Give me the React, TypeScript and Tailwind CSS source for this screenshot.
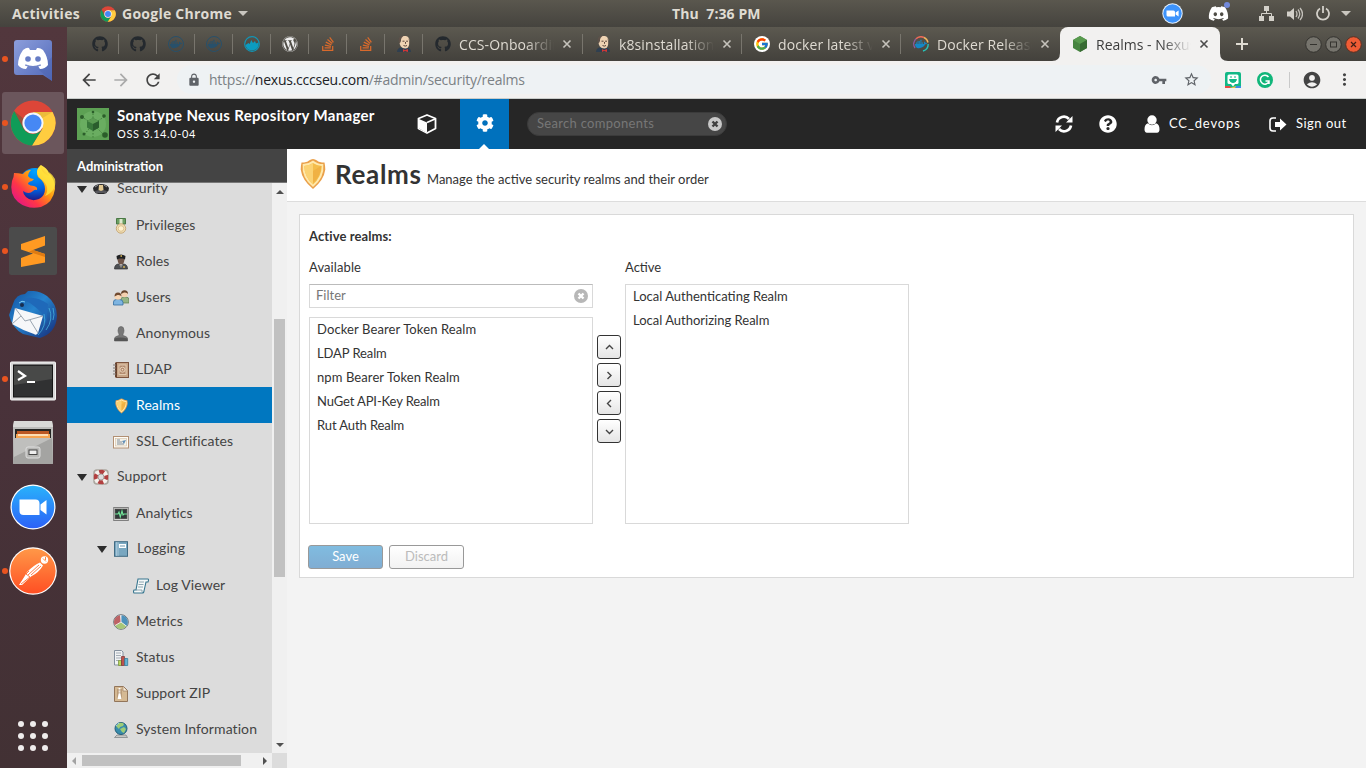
import React from 'react';
import { FaGithub, FaDocker, FaWordpress, FaStackOverflow, FaDiscord, FaCog, FaQuestionCircle } from 'react-icons/fa';
import { MdArrowBack, MdArrowForward, MdRefresh, MdLock, MdVpnKey, MdStarBorder, MdAccountCircle, MdMoreVert } from 'react-icons/md';
import { FcGoogle } from 'react-icons/fc';

const sys = "font-['Open_Sans','Noto_Sans',sans-serif]";

function Chrome({ size }: { size: number }) {
  return (
    <svg width={size} height={size} viewBox="1 1 46 46">
      <circle cx="24" cy="24" r="22.5" fill="#dc4638" />
      <path d="M24 13H43.6A22.5 22.5 0 0 1 23 46.5L33.5 29.5Z" fill="#ffcd40" />
      <path d="M5.2 12L14.5 29.5A11 11 0 0 0 33.5 29.5L23 46.5A22.5 22.5 0 0 1 5.2 12Z" fill="#109c58" />
      <path d="M24 13H43.6L33.5 19Z" fill="#b58a2a" opacity=".25" />
      <path d="M14 29L5.2 12L15 20Z" fill="#0a6b3c" opacity=".3" />
      <circle cx="24" cy="24" r="10.6" fill="#f5f7fa" />
      <circle cx="24" cy="24" r="8.6" fill="#4688f4" />
    </svg>
  );
}

function Jenkins() {
  return (
    <svg width="16" height="18" viewBox="0 0 16 18">
      <path d="M1 17c0-3 2-4.500 4-4.500h6c2 0 4 1.500 4 4.500z" fill="#2f3f50" />
      <path d="M3 6C3 2.500 5 1 8.500 1s5.200 2 5 5.500-.8 7-4.200 7C5.500 13.500 3.500 10.500 3 6z" fill="#efd3b3" />
      <path d="M3.500 9C1.200 4 3.500.6 8.500.6 6 1.800 4.800 3.500 5 6z" fill="#5d5149" />
      <path d="M12.500 3c1.800 2 1.500 5 .5 7.500V6z" fill="#5d5149" />
      <path d="M6.500 6.200h2m1.600 0h1.900M7.500 10.500q1.800 1.200 3.500 0M9.500 7v1.800" stroke="#49362c" strokeWidth=".9" fill="none" />
      <path d="M7 14l2 1.200 3-1.200v3l-3-1-2 1z" fill="#d33833" />
    </svg>
  );
}

function DockerDocs() {
  return (
    <span className="relative flex size-4 items-center justify-center">
      <svg width="16" height="16" viewBox="0 0 16 16" fill="none" strokeWidth="1.400" className="absolute">
        <path d="M2 12A7.200 7.200 0 0 1 3 2.700" stroke="#8d5c9e" />
        <path d="M3 2.700A7.200 7.200 0 0 1 11 1.500" stroke="#ee6a57" />
        <path d="M11 1.500A7.200 7.200 0 0 1 15 6.500" stroke="#f2b45a" />
        <path d="M15.200 8A7.200 7.200 0 0 1 10 15" stroke="#27c3b9" />
      </svg>
      <FaDocker size={12} color="#1488c6" />
    </span>
  );
}

function Cube() {
  return (
    <svg width="16" height="18" viewBox="0 0 16 18">
      <path d="M8 1l7 4v8l-7 4-7-4V5z" fill="#468440" />
      <path d="M8 1l7 4-7 4-7-4z" fill="#589a4e" />
      <path d="M8 9l7-4v8l-7 4z" fill="#386c33" />
    </svg>
  );
}

const Cross = ({ color = '#c6c3bc' }: { color?: string }) => (
  <svg width="10" height="10" viewBox="0 0 10 10"><path d="M1.500 1.500l7 7m0-7l-7 7" stroke={color} strokeWidth="1.600" /></svg>
);

const ClearIcon = ({ bg, fg }: { bg: string; fg: string }) => (
  <svg width="14" height="14" viewBox="0 0 14 14"><circle cx="7" cy="7" r="7" fill={bg} /><path d="M4.500 4.500l5 5m0-5l-5 5" stroke={fg} strokeWidth="2.400" /></svg>
);

function TopBar() {
  return (
    <header className={`flex h-[27px] shrink-0 items-center bg-linear-to-b from-[#5a574e] to-[#45433e] pl-3 text-[14px] font-bold text-[#dfdbd2] ${sys}`}>
      <span className="w-[88px] tracking-[0.3px]">Activities</span>
      <Chrome size={16} />
      <span className="ml-1.5 w-[111px] whitespace-nowrap tracking-[0.25px]">Google Chrome</span>
      <svg width="10" height="6" className="ml-[5px]"><path d="M0 0h10L5 5z" fill="#c9c6bf" /></svg>
      <span className="ml-[424px] w-[90px] whitespace-pre tracking-[0.1px]">Thu  7:36 PM</span>
      <span className="ml-auto flex items-center">
        <svg width="21" height="21" viewBox="0 0 21 21"><circle cx="10.500" cy="10.500" r="10.200" fill="#e7f1fb" /><circle cx="10.500" cy="10.500" r="9.200" fill="#3d93fb" /><path d="M4.500 7.500h7a1.500 1.500 0 0 1 1.500 1.500v4.500H6A1.500 1.500 0 0 1 4.500 12zM13.600 9.500l3-2v6l-3-2z" fill="#fff" /></svg>
        <span className="relative ml-[25px] h-5 w-[22px]"><FaDiscord size={21} color="#fff" className="-mt-px" /><i className="absolute -top-0.5 right-0 size-1.5 rounded-full bg-[#7289da]" /></span>
        <svg width="15" height="15" viewBox="0 0 15 15" className="ml-[29px]"><path d="M5 0h5v5H5zM0 10h5v5H0zM10 10h5v5h-5z" fill="#d3d0c9" /><path d="M7.500 5v3M2.500 10V7.500h10V10" stroke="#d3d0c9" fill="none" /></svg>
        <svg width="16" height="14" viewBox="0 0 16 14" className="ml-[13px]"><path d="M0 4.500h3L7 1v12L3 9.500H0z" fill="#d3d0c9" /><path d="M9 4q2 3 0 6M11 2.500q3.500 4.500 0 9M13 1q5 6 0 12" stroke="#c3c0b9" strokeWidth="1.300" fill="none" /></svg>
        <svg width="14" height="15" viewBox="0 0 14 15" className="ml-[13px]"><path d="M4 2.500a6 6 0 1 0 6 0M7 0v7" stroke="#d3d0c9" strokeWidth="1.800" fill="none" /></svg>
        <svg width="10" height="6" className="mr-[15px] ml-[11px]"><path d="M0 0h10L5 5z" fill="#c9c6bf" /></svg>
      </span>
    </header>
  );
}

const DockIcons: { dot: boolean; icon: React.ReactNode; active?: boolean }[] = [
  {
    dot: true,
    icon: (
      <svg width="48" height="48" viewBox="0 0 48 48">
        <defs><linearGradient id="dc" x1="0" y1="0" x2="1" y2="1"><stop offset="0" stopColor="#8c9edb" /><stop offset="1" stopColor="#5068b9" /></linearGradient></defs>
        <path d="M8 5h32a3 3 0 0 1 3 3v38l-9-6H8a3 3 0 0 1-3-3V8a3 3 0 0 1 3-3z" fill="url(#dc)" />
        <path d="M30 35l13 11V22z" fill="#4962ae" opacity=".4" />
        <path d="M14 15q4-3 6-2l1 2h6l1-2q3-.5 6 2 5 7 5 15-3 4-8 4l-2-3 3-2q-8 4-16 0l3 2-2 3q-5 0-8-4 0-8 5-15z" fill="#fff" />
        <path d="M16 30q8 4 16 0" stroke="#7084c7" fill="none" /><circle cx="19" cy="24" r="2.800" fill="#667cc5" /><circle cx="29" cy="24" r="2.800" fill="#667cc5" />
      </svg>
    ),
  },
  { dot: true, active: true, icon: <Chrome size={46} /> },
  {
    dot: true,
    icon: (
      <svg width="48" height="48" viewBox="0 0 48 48">
        <defs>
          <linearGradient id="ff" x1=".9" y1=".1" x2=".1" y2=".9"><stop offset="0" stopColor="#fff44f" /><stop offset=".4" stopColor="#ff980e" /><stop offset=".7" stopColor="#ff3647" /><stop offset="1" stopColor="#e31587" /></linearGradient>
          <radialGradient id="fb" cx=".5" cy=".1" r=".9"><stop offset="0" stopColor="#00a5ff" /><stop offset=".6" stopColor="#0060df" /><stop offset="1" stopColor="#24107a" /></radialGradient>
        </defs>
        <circle cx="26" cy="22" r="17" fill="url(#fb)" />
        <path d="M5 11q0 4-2 8Q0 32 9 40q10 8 23 5 12-4 14-18 0-10-6-16Q38 6 32 3q-6 5-3 12 7 5 7 12 0 7-6 10-8 3-13-2-3-3-3-6 6 4 10 0 2-2 4-1 1-3-3-4-4 0-6-2 0-2 4-3l2-2q-4 0-6-3 0-3 3-6-5 0-8 4-5-1-9-1z" transform="translate(0 -1)" fill="url(#ff)" />
        <path d="M32 2q-8 7 0 14 10 8 4 17 12-5 10-17-2-4-6-7 1 5-2 3-7-4-6-10z" fill="#ffe43c" opacity=".8" />
      </svg>
    ),
  },
  {
    dot: true,
    icon: (
      <svg width="48" height="48" viewBox="0 0 48 48"><rect width="48" height="48" rx="2.500" fill="#4b4b4b" /><path d="M12 17l24-8v9.500l-12 4.500 12 4v8.500L12 40v-9l12-4.500-12-4z" fill="#ff9a22" /><path d="M24 23l12 4v3l-16-5.300z" fill="#df7b12" /></svg>
    ),
  },
  {
    dot: false,
    icon: (
      <svg width="50" height="48" viewBox="0 0 50 48">
        <defs><linearGradient id="tb" x1="0" y1="0" x2="1" y2="1"><stop offset="0" stopColor="#114f9e" /><stop offset=".45" stopColor="#2684ce" /><stop offset="1" stopColor="#152874" /></linearGradient></defs>
        <path d="M17 3l3-3q10-1 19 5 10 8 10 20-1 17-17 22L15 43Q4 37 1 24L5 13Q8 3 17 3z" fill="url(#tb)" />
        <path d="M7 17l28 8-5 17q-2 3-4 1Q14 39 4 33z" fill="#f6f7f9" /><path d="M7 17l10 13 18-5M4 33l9-8M30 42l-8-13" stroke="#9aa5b0" fill="none" />
        <path d="M5 14Q14 6 22 12t12 10l4 11 2-20Q27 4 16 8L9 11z" fill="#1f69b9" /><circle cx="14" cy="14" r="2" fill="#192e4e" /><path d="M11 12q3-3 6-1" stroke="#7ccbf0" fill="none" />
        <path d="M36 23q3 12-6 21M41 17q5 11-3 22M45 17q2 7 0 12" stroke="#4bbde5" fill="none" opacity=".7" />
      </svg>
    ),
  },
  {
    dot: true,
    icon: (
      <svg width="46" height="40" viewBox="0 0 46 40" className="mt-[3px]"><rect x=".5" y="1" width="45" height="38" rx="1" fill="#d9d9d9" stroke="#f3f3f3" /><rect x="3.500" y="4" width="39" height="32" fill="#303132" stroke="#161616" /><path d="M4 5h38v13L4 24z" fill="#484948" /><path d="M8 10l7 5-7 4M17 21h8" stroke="#fff" strokeWidth="2.200" fill="none" /></svg>
    ),
  },
  {
    dot: false,
    icon: (
      <svg width="42" height="44" viewBox="0 0 42 44"><path d="M2 0h38l1 5v37H1V5z" fill="#bcbcba" /><path d="M2 0h38l1 6H1z" fill="#d9d9d7" /><rect x="3" y="8" width="36" height="10" fill="#242523" /><path d="M5 10h32v7H5z" fill="#bb5824" /><path d="M4 13h34v5H4z" fill="#f5a452" /><path d="M6 14h30" stroke="#fff0d6" strokeWidth="1.500" /><path d="M2 17h38l1 26H1z" fill="#a4a4a2" /><path d="M2 17h38L2 36z" fill="#bfbfbd" /><rect x="14" y="26" width="14" height="11" rx="2" fill="#b8b8b6" stroke="#dedede" /><rect x="17" y="29" width="8" height="4.500" fill="#eee" stroke="#454545" /></svg>
    ),
  },
  {
    dot: false,
    icon: (
      <svg width="46" height="46" viewBox="0 0 46 46"><defs><linearGradient id="zm" x1="0" y1="0" x2="0" y2="1"><stop offset="0" stopColor="#29b2fb" /><stop offset="1" stopColor="#2c61f7" /></linearGradient></defs><circle cx="23" cy="23" r="22.500" fill="#fff" /><circle cx="23" cy="23" r="21.300" fill="url(#zm)" /><path d="M9.500 15.500h16a4 4 0 0 1 4 4V31h-16a4 4 0 0 1-4-4zM30.500 20.500l6-4.500v14.500l-6-4.500z" fill="#fff" /></svg>
    ),
  },
  {
    dot: true,
    icon: (
      <svg width="48" height="48" viewBox="0 0 48 48"><defs><linearGradient id="pm" x1="0" y1="0" x2="0" y2="1"><stop offset="0" stopColor="#ff9848" /><stop offset="1" stopColor="#ff4f23" /></linearGradient></defs><circle cx="24" cy="24" r="23.800" fill="#fff" /><circle cx="24" cy="24" r="22.600" fill="url(#pm)" /><circle cx="35.500" cy="13" r="3.700" fill="#fff" /><path d="M34 11.500l3 3M36.500 10v3" stroke="#ff8743" /><path d="M31 15.500l3 3q-4 7-12 11l-9 8.500H10q6-9 8-13 7-7 13-9.500z" fill="#fff" /><path d="M30 18l-11 10m13-9L22 28m-2-4l-3 3 4 3-9 7" stroke="#ff7036" fill="none" strokeWidth=".9" /></svg>
    ),
  },
];

function Dock() {
  return (
    <aside className="flex w-[67px] shrink-0 flex-col bg-linear-to-b from-[#52373d] via-[#49323a] to-[#423134]">
      {DockIcons.map((d, i) => (
        <div key={i} className="flex h-16 w-[67px] items-center">
          <div className={d.active ? 'relative ml-0.5 flex h-[62px] w-[62px] items-center justify-center rounded-[3px] bg-[#6b565c]' : 'relative ml-0.5 flex h-[62px] w-[62px] items-center justify-center'}>
            {d.dot && <i className="absolute top-[28px] left-0 size-1.5 rounded-full bg-[#e95420]" />}
            {d.icon}
          </div>
        </div>
      ))}
      <div className="mt-auto mb-[17px] ml-[18px] grid grid-cols-3 gap-1.5 self-start">
        {Array.from({ length: 9 }, (_, i) => <i key={i} className="size-1.5 rounded-full bg-[#efecec]" />)}
      </div>
    </aside>
  );
}

function TabStrip() {
  const so = <FaStackOverflow size={16} color="#d96a2c" />;
  const pins = [
    <FaGithub size={16} color="#24292e" />, <FaGithub size={16} color="#24292e" />,
    <span className="flex size-4 items-center justify-center rounded-full border border-[#28506a]"><FaDocker size={12} color="#28506a" /></span>,
    <span className="flex size-4 items-center justify-center rounded-full border border-[#28506a]"><FaDocker size={12} color="#28506a" /></span>,
    <svg width="16" height="16" viewBox="0 0 16 16"><circle cx="8" cy="8" r="7.300" fill="none" stroke="#1395b5" strokeWidth="1.200" /><path d="M1.500 9l3-2 1.200 1 1.600-4L9 7l2-2 1 2.500 2.500-1Q15 14 8 14.500 2.500 14 1.500 9z" fill="#0b9cc0" /></svg>,
    <FaWordpress size={16} color="#eee" />, so, so, <Jenkins />,
  ];
  const tabs = [
    { t: 'CCS-Onboarding', i: <FaGithub size={16} color="#24292e" />, w: 'w-[160px]' },
    { t: 'k8sinstallation', i: <Jenkins />, w: 'w-[159px]' },
    { t: 'docker latest ve', i: <span className="flex size-4 items-center justify-center rounded-full bg-white"><FcGoogle size={14} /></span>, w: 'w-[159px]' },
    { t: 'Docker Release', i: <DockerDocs />, w: 'w-[159px]' },
  ];
  return (
    <div className={`flex h-[34px] shrink-0 items-center bg-linear-to-b from-[#5c5950] to-[#43413c] pl-[14px] text-[14px] ${sys}`}>
      {pins.map((p, i) => <div key={i} className="flex h-5 w-[38px] items-center justify-center border-r border-[#78756d]">{p}</div>)}
      {tabs.map((t, i) => (
        <div key={i} className={`flex h-5 items-center pl-3 ${t.w} ${i < 3 ? 'border-r border-[#78756d]' : ''}`}>
          <span className="flex w-4 justify-center">{t.i}</span>
          <span className="ml-2 w-[95px] overflow-hidden tracking-[0.1px] whitespace-nowrap text-[#dfdbd2] [mask-image:linear-gradient(90deg,#000_70%,transparent)]">{t.t}</span>
          <span className="ml-2"><Cross /></span>
        </div>
      ))}
      <div className="relative flex h-full w-[160px] items-center rounded-t-[8px] bg-[#f2f1f0] pl-3">
        <svg width="8" height="8" className="absolute bottom-0 -left-2"><path d="M8 0v8H0q8 0 8-8z" fill="#f2f1f0" /></svg>
        <svg width="8" height="8" className="absolute -right-2 bottom-0"><path d="M0 0v8h8q-8 0-8-8z" fill="#f2f1f0" /></svg>
        <Cube />
        <span className="ml-2 w-[95px] overflow-hidden whitespace-nowrap text-[#3c3c3c] [mask-image:linear-gradient(90deg,#000_70%,transparent)]">Realms - Nexus</span>
        <span className="ml-2"><Cross color="#4b4b4b" /></span>
      </div>
      <svg width="12" height="12" viewBox="0 0 12 12" className="ml-4"><path d="M6 0v12M0 6h12" stroke="#dfdbd2" strokeWidth="2" /></svg>
      <div className="mr-1 ml-auto flex gap-[3px]">
        <svg width="17" height="17" viewBox="0 0 17 17"><circle cx="8.500" cy="8.500" r="7.800" fill="#76746d" stroke="#34332f" /><path d="M5 8.500h7" stroke="#34332f" /></svg>
        <svg width="17" height="17" viewBox="0 0 17 17"><circle cx="8.500" cy="8.500" r="7.800" fill="#76746d" stroke="#34332f" /><rect x="5.500" y="6" width="6" height="5" fill="none" stroke="#34332f" /></svg>
        <svg width="17" height="17" viewBox="0 0 17 17"><circle cx="8.500" cy="8.500" r="7.800" fill="#ef5c35" stroke="#5b3023" /><path d="M6 6l5 5m0-5l-5 5" stroke="#402017" strokeWidth="1.200" /></svg>
      </div>
    </div>
  );
}

function AddressBar() {
  return (
    <div className="flex h-[38px] shrink-0 items-center border-b border-[#c8ccca] bg-[#f2f1f0] pl-3 text-[#5f6368]">
      <MdArrowBack size={20} color="#444" />
      <MdArrowForward size={20} color="#aaa" className="ml-3" />
      <MdRefresh size={20} color="#444" className="ml-3" />
      <div className="ml-3.5 flex h-[29px] w-[1034px] items-center rounded-full bg-[#eef2f4] pl-[10px]">
        <MdLock size={14} />
        <span className={`ml-2 whitespace-nowrap text-[14px] tracking-[-0.24px] text-[#7b8185] ${sys}`}>https://<span className="text-[#202124]">nexus.cccseu.com</span>/#admin/security/realms</span>
        <MdVpnKey size={16} className="mr-4 ml-auto" />
        <MdStarBorder size={17} className="mr-[11px]" />
      </div>
      <svg width="16" height="16" viewBox="0 0 16 16" className="ml-[14px]"><rect width="16" height="16" rx="2" fill="#12b886" /><path d="M0 14h5l1 2H0z" fill="#e84b43" /><path d="M5 16h6v-2z" fill="#f5c33b" /><path d="M11 14h5v2h-6z" fill="#3a8ee6" /><rect x="2.500" y="2.500" width="11" height="9.500" rx="1.500" fill="#fff" /><path d="M6 12h4l-2 2.500z" fill="#fff" /><path d="M5 5h2m2 0h2M4.500 7.500h7q-.5 3-3.500 3t-3.500-3z" fill="#12b886" stroke="#12b886" /></svg>
      <svg width="16" height="16" viewBox="0 0 16 16" className="ml-4"><circle cx="8" cy="8" r="8" fill="#11b67a" /><path d="M11.500 5A4.500 4.500 0 1 0 12 9.500M8.500 9h3.500v3" stroke="#fff" strokeWidth="1.500" fill="none" /></svg>
      <i className="ml-4 h-4 w-px bg-[#c9c9c9]" />
      <MdAccountCircle size={20} color="#444" className="ml-3" />
      <MdMoreVert size={19} color="#444" className="ml-[13px]" />
    </div>
  );
}

function AppHeader() {
  return (
    <div className="flex h-[50px] shrink-0 items-center bg-[#262626] pl-2.5 text-white">
      <svg width="32" height="32" viewBox="0 0 32 32"><rect width="32" height="32" fill="#5da154" /><circle cx="16" cy="16" r="13" fill="#78ba6d" opacity=".5" /><path d="M16 16L5 9M16 16l-9 11M16 16l11-7M16 16l11 11M16 16V3M16 16v14" stroke="#3f7e39" strokeDasharray="1.500 1.500" /><g fill="#2b5d2a"><circle cx="5" cy="9" r="2" /><circle cx="7" cy="26" r="1.500" /><circle cx="27" cy="8" r="1.800" /><circle cx="28" cy="27" r="2.800" /><circle cx="16" cy="4" r="1.300" /></g><path d="M16 10l6 3v6.500L16 23l-6-3.500V13z" fill="#38773a" /><path d="M16 10l6 3-6 3-6-3z" fill="#5a9a52" /><path d="M16 16l6-3v6.500L16 23z" fill="#2a5c2d" /></svg>
      <div className="ml-2 flex w-[300px] flex-col whitespace-nowrap">
        <span className="text-[15px] leading-[18px] font-bold tracking-[0.33px]">Sonatype Nexus Repository Manager</span>
        <span className="pt-px pb-px text-[11px] leading-[17px] tracking-[0.6px]">OSS 3.14.0-04</span>
      </div>
      <svg width="20" height="20" viewBox="0 0 20 20"><path d="M10 1l8.500 3.500v10L10 19l-8.500-4.500v-10z" fill="none" stroke="#fff" strokeWidth="1.800" strokeLinejoin="round" /><path d="M2 5l8 3.500V18.500L2 14.500z" fill="#262626" /><path d="M2 5v9.500l8 4.500V8.500z" fill="#fff" /><path d="M18 5l-8 3.500" stroke="#fff" strokeWidth="1.600" fill="none" /></svg>
      <div className="relative ml-[23px] flex h-[50px] w-[49px] items-center justify-center bg-[#0071bd]">
        <FaCog size={18} className="-mt-[3px]" />
        <svg width="10" height="5" className="absolute bottom-0 left-[19px]"><path d="M0 5l5-5 5 5z" fill="#fff" /></svg>
      </div>
      <div className="ml-[18px] flex h-6 w-[200px] items-center justify-between rounded-full border border-[#3b3b3b] bg-[#464646] pr-1 pl-[9px] text-[13px] tracking-[0.3px] text-[#777]">
        <span>Search components</span><ClearIcon bg="#c8c8c8" fg="#3f3f3f" />
      </div>
      <div className="mr-[19px] ml-auto flex items-center text-[13px]">
        <svg width="18" height="18" viewBox="0 0 18 18"><path d="M2 7.500A7 7 0 0 1 14 4M16 10.500A7 7 0 0 1 4 14" fill="none" stroke="#fff" strokeWidth="2.700" /><path d="M17.500 1v6.500H11zM.5 17v-6.500H7z" fill="#fff" /></svg>
        <FaQuestionCircle size={18} className="ml-[26px]" />
        <svg width="16" height="18" viewBox="0 0 16 18" className="ml-[27px]"><circle cx="8" cy="5" r="4.700" fill="#fff" /><path d="M4 8.300Q8 12 12 8.300q3.500 1.200 3.500 6 0 3.400-2.500 3.400H3q-2.500 0-2.500-3.400 0-4.800 3.500-6z" fill="#fff" /></svg>
        <span className="ml-[9px] w-[72px] whitespace-nowrap tracking-[0.85px]">CC_devops</span>
        <svg width="18" height="15" viewBox="0 0 18 15" className="ml-7"><path d="M7 1H4Q1 1 1 4v7q0 3 3 3h3" fill="none" stroke="#fff" strokeWidth="1.600" /><path d="M6 5h5V1.500l6.500 6-6.500 6V10H6z" fill="#fff" /></svg>
        <span className="ml-[9px] w-[51px] whitespace-nowrap tracking-[0.5px]">Sign out</span>
      </div>
    </div>
  );
}

const Shield = ({ w, h }: { w: number; h: number }) => (
  <svg width={w} height={h} viewBox="0 0 26 32" preserveAspectRatio="none"><path d="M13 1q2 0 4 1.500 2 2 7.500 2 .8 4 .8 7Q24 22 13 31 2 22 .7 11.500q0-3 .8-7 5.500 0 7.500-2Q11 1 13 1z" fill="#eaa04a" /><path d="M13 2.500q5 3.800 10.300 3.600 1.500 13.500-10.300 23Q1.200 19.600 2.700 6.100 8 6.300 13 2.500z" fill="#ffe9ad" /><path d="M13 5q4 2.800 8.800 3-.3 11-8.800 18.500Q4.500 19 4.200 8 9 7.800 13 5z" fill="#f4bd4c" /><path d="M13 5v21.500Q4.500 19 4.200 8 9 7.800 13 5z" fill="#fbd273" /><path d="M13 13l8-5q0 7-5 14l-3 3z" fill="#eba63a" opacity=".5" /></svg>
);

const I = ({ children }: { children: React.ReactNode }) => <svg width="16" height="16" viewBox="0 0 16 16">{children}</svg>;

const icons: Record<string, React.ReactNode> = {
  Security: <I><path d="M0 7q2-4 8-4t8 4q0 3-2 4 0 2-6 2t-6-2Q0 10 0 7z" fill="#29292b" /><path d="M2 10q6-2 12 0l-1 2H3z" fill="#56565b" /><path d="M6 4h4l.5 5L8 10 5.500 9z" fill="#e2c890" /><path d="M2 6l3-2M11 4l3 2" stroke="#8f8f93" /></I>,
  Privileges: <I><path d="M3.500.500h9V6h-9z" fill="#6b9e62" stroke="#4a7945" /><path d="M6.500 1h3v5h-3z" fill="#dfe9ce" /><circle cx="8" cy="10.500" r="4.700" fill="#f2e0b5" stroke="#c8a978" /><circle cx="8" cy="10.500" r="2.800" fill="#fff1ce" stroke="#dcc394" /></I>,
  Roles: <I><path d="M1.500 15q0-5 4.500-5h4q4.500 0 4.500 5z" fill="#4d5053" stroke="#303133" strokeWidth=".7" /><path d="M4.500 5q3.500-2 7 0-.2 5.500-3.500 6-3.300-.5-3.500-6z" fill="#6f5549" /><path d="M3.500 2Q8-1 12.500 2L12 5.500Q8 3.500 4 5.500z" fill="#1f2022" /><path d="M6.500 10.500L8 15l1.500-4.500z" fill="#fff" /><path d="M8 11v4" stroke="#222" /><path d="M11 12v2M7.500 2h1.500" stroke="#e4be56" strokeWidth="1.300" /></I>,
  Users: <I><path d="M8 13V9q0-2 3-2h2q3 0 3 3v3z" fill="#96b585" stroke="#5d7b4f" strokeWidth=".7" /><circle cx="11.500" cy="4" r="3.300" fill="#f4d1af" /><path d="M8 4Q8 .3 11.500.3T15 4q-1-2-4-1.500z" fill="#67462e" /><path d="M.5 15v-3q0-2.500 3-2.500h3q3.500 0 3.500 3V15z" fill="#7fb5e1" stroke="#356d9f" strokeWidth=".8" /><circle cx="5" cy="6.500" r="3.300" fill="#f8d6b4" /><path d="M1.500 6.500q0-4 3.500-4t3.500 4q-1-2-4-1.500z" fill="#724b30" /></I>,
  Anonymous: <I><path d="M8 .5q3 0 3 4 0 2-1 3.500v1.500q4.500 1 4.500 3V15h-13v-2.500q0-2 4.500-3V8Q5 6.500 5 4.500q0-4 3-4z" fill="#777" stroke="#606060" strokeWidth=".6" /><path d="M1.500 12.500q6-2 13 0V15h-13z" fill="#555" /></I>,
  LDAP: <I><rect x="3" y=".5" width="12.500" height="15" fill="#c7a486" stroke="#7d543e" /><path d="M3 1v14" stroke="#69432f" strokeWidth="2" /><path d="M0 3h3M0 6h3M0 9h3M0 12h3" stroke="#807b77" /><rect x="6" y="3" width="7" height="9.500" fill="#b48c70" stroke="#ecd6bd" strokeWidth=".8" /><circle cx="9.500" cy="7.700" r="2.500" fill="none" stroke="#f1dfc8" strokeWidth=".8" /><circle cx="9.500" cy="7.700" r=".8" fill="#f1dfc8" /></I>,
  Realms: <Shield w={13} h={16} />,
  'SSL Certificates': <I><rect x=".500" y="2.500" width="15" height="11.500" fill="#fffdf8" stroke="#b29073" /><rect x="2.500" y="4.500" width="11" height="7.500" fill="#f5f2e8" stroke="#d0bda2" strokeWidth=".6" /><path d="M4 6h3M4 8h5M4 10h7" stroke="#637489" strokeWidth=".8" /><path d="M9 7l4-1-2 4z" fill="#628fb7" /></I>,
  Support: <I><rect x="1" y="1" width="14" height="14" rx="3" fill="none" stroke="#aaa69e" strokeWidth="1.500" /><circle cx="8" cy="8" r="5.300" fill="none" stroke="#f5f1ec" strokeWidth="4" /><circle cx="8" cy="8" r="5.300" fill="none" stroke="#b14040" strokeWidth="4" strokeDasharray="5 3.325" strokeDashoffset="2.500" /><circle cx="8" cy="8" r="3" fill="#dedede" stroke="#958582" strokeWidth=".7" /></I>,
  Analytics: <I><rect x=".7" y="1.500" width="14.600" height="13" fill="#d2d2d0" stroke="#7f7f7f" /><rect x="2.300" y="3.300" width="11.400" height="9" fill="#303a3a" stroke="#3d3d3d" /><path d="M2 8h3l1-2 1.300 5L9 5l1 4 1-1h3" fill="none" stroke="#73e69a" strokeWidth="1.100" /></I>,
  Logging: <I><rect x="1.500" y=".700" width="13" height="14.600" fill="#79a7c0" stroke="#426b83" /><path d="M3.500 1v14M5 1v14" stroke="#c5dce8" strokeWidth=".6" /><rect x="6" y="3" width="7" height="4" fill="#fff" /><path d="M7 5h5" stroke="#6c98b0" /></I>,
  'Log Viewer': <I><path d="M5 1h10q1 .5 0 3h-2l-2 9q0 2-2 2H1q-1-1 0-3h2z" fill="#f4f8f8" stroke="#36758e" strokeWidth="1.100" /><path d="M6 4h5M5.500 6.500h5M5 9h5M3 12h6v2" fill="none" stroke="#76929e" strokeWidth=".8" /></I>,
  Metrics: <I><circle cx="8" cy="8" r="7.300" fill="#f2f2f2" stroke="#687076" /><path d="M8 8V1.200A6.800 6.800 0 0 1 13.500 12z" fill="#4c91bb" /><path d="M8 8l5.500 4A6.800 6.800 0 0 1 2 11.500z" fill="#a7c778" /><path d="M8 8l-6 3.500A6.800 6.800 0 0 1 7 1.200z" fill="#bd6264" /><path d="M8 8V1M8 8l5.500 4.200M8 8l-6 3.500" stroke="#f5f5f5" strokeWidth=".8" /></I>,
  Status: <I><path d="M1.500.500h7L10 2v13H1.500z" fill="#f0f2f4" stroke="#84909e" /><path d="M3 3h5M3 5.500h5M3 8h5M3 10.500h3" stroke="#a5adb6" /><path d="M5.500 10.500h3v5h-3z" fill="#b8d65e" stroke="#738b33" strokeWidth=".7" /><path d="M8.500 6.500h3v9h-3z" fill="#bd524d" stroke="#7c3130" strokeWidth=".7" /><path d="M11.700 8.500h3v7h-3z" fill="#65b4d5" stroke="#297291" strokeWidth=".7" /></I>,
  'Support ZIP': <I><path d="M1.500.500h9l4 4v11h-13z" fill="#d5b993" stroke="#92755a" /><path d="M10 .500V5h4" fill="#f9eddb" stroke="#9b8064" strokeWidth=".7" /><path d="M4 3h5v10H4z" fill="#b99b78" /><path d="M6.500 2v6" stroke="#fff" strokeWidth="1.800" strokeDasharray="1 .6" /><path d="M5.500 8h2l1 5h-4z" fill="#fff" /></I>,
  'System Information': <I><path d="M4 13h9l1.500 2.500h-13z" fill="#c8c8c5" stroke="#757d80" strokeWidth=".7" /><circle cx="8" cy="6.500" r="6" fill="#388cac" stroke="#225d77" /><path d="M6 1q3-1 5 1l-1 2-3 1-1 2-3-3zM7 7l4-2 2 2-2 4-2-1z" fill="#9dcc77" /><path d="M3 4q1-2 3-3" stroke="#a6dfe9" /></I>,
};

const nav: { t: string; lvl: number }[] = [
  { t: 'Security', lvl: 0 }, { t: 'Privileges', lvl: 1 }, { t: 'Roles', lvl: 1 }, { t: 'Users', lvl: 1 },
  { t: 'Anonymous', lvl: 1 }, { t: 'LDAP', lvl: 1 }, { t: 'Realms', lvl: 1 }, { t: 'SSL Certificates', lvl: 1 },
  { t: 'Support', lvl: 0 }, { t: 'Analytics', lvl: 1 }, { t: 'Logging', lvl: 2 }, { t: 'Log Viewer', lvl: 3 },
  { t: 'Metrics', lvl: 1 }, { t: 'Status', lvl: 1 }, { t: 'Support ZIP', lvl: 1 }, { t: 'System Information', lvl: 1 },
];
const indent = ['pl-[10px]', 'pl-[46px]', 'pl-[30px]', 'pl-[66px]'];

function Sidebar() {
  return (
    <div className="flex w-[220px] shrink-0 flex-col">
      <div className="flex h-[34px] shrink-0 items-center border-b border-[#777] bg-[#444] pt-0.5 pl-2.5 text-[13px] font-bold text-white">Administration</div>
      <div className="flex min-h-0 flex-1">
        <div className="w-[205px] overflow-hidden bg-[#dcdcdc]">
          <div className="-mt-3">
            {nav.map((n) => {
              const parent = n.lvl === 0 || n.lvl === 2;
              return (
                <div key={n.t} className={`flex h-9 items-center text-[14px] tracking-[0.08px] whitespace-nowrap ${indent[n.lvl]} ${n.t === 'Realms' ? 'bg-[#0077c0] text-white' : 'text-[#444]'}`}>
                  {parent && <svg width="10" height="7" className="mr-1.5 shrink-0"><path d="M0 0h10L5 7z" fill="#2d2d2d" /></svg>}
                  <span className={`flex w-4 shrink-0 justify-center ${parent ? 'mr-2' : 'mt-0.5 mr-[7px]'}`}>{icons[n.t]}</span>
                  <span className={parent ? 'pb-[3px]' : 'pb-0.5'}>{n.t}</span>
                </div>
              );
            })}
          </div>
        </div>
        <div className="flex w-[15px] flex-col items-center bg-[#f0f0f0] pt-[7px] pb-[6px]">
          <svg width="8" height="4"><path d="M0 4l4-4 4 4z" fill="#505050" /></svg>
          <div className="mt-[125px] h-[258px] w-[11px] bg-[#c1c1c1]" />
          <svg width="8" height="4" className="mt-auto"><path d="M0 0h8L4 4z" fill="#505050" /></svg>
        </div>
      </div>
      <div className="flex h-[15px] shrink-0 items-center bg-[#f0f0f0]">
        <svg width="4" height="8" className="ml-[5px]"><path d="M4 0v8L0 4z" fill="#a3a3a3" /></svg>
        <div className="ml-1.5 h-[11px] w-[159px] bg-[#c1c1c1]" />
        <svg width="4" height="8" className="ml-[22px]"><path d="M0 0v8l4-4z" fill="#505050" /></svg>
        <div className="ml-auto h-full w-[15px] bg-[#dcdcdc]" />
      </div>
    </div>
  );
}

const arrows = ['M5 10L8.500 6.500 12 10', 'M6.500 5L10 8.500 6.500 12', 'M10 5L6.500 8.500 10 12', 'M5 7L8.500 10.500 12 7'];

const available = [
  { t: 'Docker Bearer Token Realm', c: 'tracking-[0.11px]' },
  { t: 'LDAP Realm', c: 'tracking-[-0.1px]' },
  { t: 'npm Bearer Token Realm', c: 'tracking-[0.09px]' },
  { t: 'NuGet API-Key Realm', c: 'tracking-[-0.12px]' },
  { t: 'Rut Auth Realm', c: 'tracking-[-0.1px]' },
];

function Content() {
  return (
    <main className="flex min-w-0 flex-1 flex-col bg-[#f3f3f3] text-[#333]">
      <div className="flex h-[53px] shrink-0 border-b border-[#ddd] bg-white pl-[13px]">
        <div className="pt-[9px]"><Shield w={26} h={32} /></div>
        <div className="flex items-baseline pl-[9px]">
          <h1 className="w-[92px] text-[26px] leading-[50px] font-bold tracking-[0.65px]">Realms</h1>
          <p className="text-[13px]">Manage the active security realms and their order</p>
        </div>
      </div>
      <section className="mx-3 mt-3 flex h-[364px] flex-col border border-[#d9d9d9] bg-white pt-[12px] pl-[9px] text-[13px]">
        <b className="leading-[18px] tracking-[0.1px]">Active realms:</b>
        <div className="mt-[13px] flex">
          <div className="w-[284px]">
            <div className="leading-[18px] tracking-[0.1px]">Available</div>
            <div className="mt-2 flex h-[24px] items-center justify-between border border-[#d9d9d9] border-t-[#bbb] pr-1 pl-1.5 text-[#777]"><span>Filter</span><ClearIcon bg="#b7b7b7" fg="#fff" /></div>
            <div className="mt-[9px] h-[207px] border border-[#d9d9d9] pl-[7px] leading-6">
              {available.map((r) => <div key={r.t} className={`-translate-y-px ${r.c}`}>{r.t}</div>)}
            </div>
          </div>
          <div className="flex w-8 flex-col items-center gap-1 pt-[77px]">
            {arrows.map((d) => (
              <button key={d} className="flex size-6 items-center justify-center rounded-[3px] border border-[#333] bg-linear-to-b from-white to-[#e5e5e5]">
                <svg width="17" height="17" viewBox="0 0 17 17"><path d={d} fill="none" stroke="#444" strokeWidth="1.400" /></svg>
              </button>
            ))}
          </div>
          <div className="w-[284px]">
            <div className="leading-[18px]">Active</div>
            <div className="mt-2 h-[240px] border border-[#d9d9d9] pl-[7px] leading-6"><div className="-translate-y-px">Local Authenticating Realm</div><div className="-translate-y-px">Local Authorizing Realm</div></div>
          </div>
        </div>
        <div className="mt-[21px] -ml-px flex gap-1.5">
          <button className="h-6 w-[75px] rounded-[3px] border border-[#999] bg-linear-to-b from-[#80bce0] to-[#80add3] text-white">Save</button>
          <button className="h-6 w-[75px] rounded-[3px] border border-[#999] bg-linear-to-b from-white to-[#f2f2f2] text-[#bbb]">Discard</button>
        </div>
      </section>
    </main>
  );
}

export default function App() {
  return (
    <div className="flex h-[768px] w-[1366px] flex-col overflow-hidden font-['Lato','Open_Sans',sans-serif]">
      <TopBar />
      <div className="flex min-h-0 flex-1">
        <Dock />
        <div className="flex min-w-0 flex-1 flex-col">
          <TabStrip />
          <AddressBar />
          <AppHeader />
          <div className="flex min-h-0 flex-1"><Sidebar /><Content /></div>
        </div>
      </div>
    </div>
  );
}
